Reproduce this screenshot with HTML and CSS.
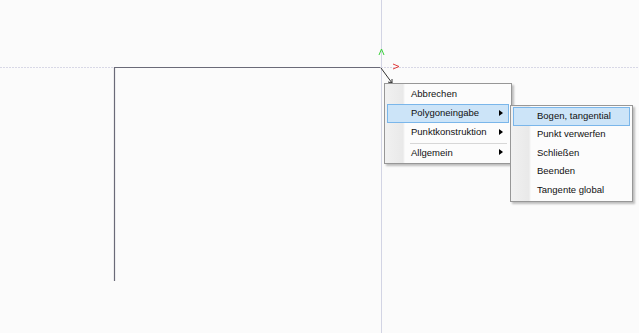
FILE: index.html
```html
<!DOCTYPE html>
<html lang="de">
<head>
    <meta charset="UTF-8">
    <title>Polygoneingabe</title>
    <link rel="stylesheet" href="styles.css">
</head>
<body>
    <div class="canvas">
        <!-- Zeichnung -->
        <svg class="drawing" width="639" height="333" viewBox="0 0 639 333">
            <line x1="381.5" y1="0" x2="381.5" y2="333" stroke="#d2d4e4" stroke-width="1"/>
            <line x1="0" y1="67.5" x2="639" y2="67.5" stroke="#d8d8e6" stroke-width="1" stroke-dasharray="2 1"/>
            <polyline points="114.5,281 114.5,67.5 380.5,67.5" fill="none" stroke="#6a6a78" stroke-width="1.2"/>
            <line x1="381" y1="68" x2="392" y2="83" stroke="#333" stroke-width="1"/>
            <polyline points="388,82 392,83 392,79" fill="none" stroke="#333" stroke-width="1"/>
            <polyline points="379,55 381.5,49 384,55" fill="none" stroke="#3ad13a" stroke-width="1"/>
            <polyline points="393,64 399,66.5 393,69" fill="none" stroke="#e03a3a" stroke-width="1"/>
        </svg>

        <!-- Kontextmenü -->
        <ul class="menu main-menu">
            <li class="item"><span class="label">Abbrechen</span></li>
            <li class="item active"><span class="label">Polygoneingabe</span><span class="arrow"></span></li>
            <li class="item"><span class="label">Punktkonstruktion</span><span class="arrow"></span></li>
            <li class="separator"></li>
            <li class="item"><span class="label">Allgemein</span><span class="arrow"></span></li>
        </ul>

        <ul class="menu sub-menu">
            <li class="item active"><span class="label">Bogen, tangential</span></li>
            <li class="item"><span class="label">Punkt verwerfen</span></li>
            <li class="item"><span class="label">Schließen</span></li>
            <li class="item"><span class="label">Beenden</span></li>
            <li class="item"><span class="label">Tangente global</span></li>
        </ul>
    </div>
</body>
</html>
```

FILE: styles.css
```css
body {
    margin: 0;
    padding: 0;
    background-color: #fbfbfb;
    font-family: "Liberation Sans", Arial, sans-serif;
    font-size: 9.5px;
    color: #111;
}

.canvas {
    position: relative;
    width: 639px;
    height: 333px;
    overflow: hidden;
}

.drawing {
    position: absolute;
    left: 0;
    top: 0;
}

.menu {
    position: absolute;
    margin: 0;
    padding: 1px 2px;
    list-style: none;
    background: linear-gradient(to right, #f1f1f1 0, #e9e9e9 18px, #fcfcfc 20px, #fcfcfc 100%);
    border: 1px solid #979797;
    box-shadow: 2px 2px 2px rgba(0, 0, 0, 0.25);
}

.main-menu {
    left: 384px;
    top: 83px;
    width: 122px;
}

.sub-menu {
    left: 510px;
    top: 105px;
    width: 117px;
}

.item {
    display: flex;
    align-items: center;
    height: 19px;
    padding-left: 23px;
    padding-bottom: 2px;
    border: 1px solid transparent;
    box-sizing: border-box;
}

.sub-menu .item {
    height: 18.5px;
}

.item.active {
    background-color: #cce4f8;
    border-color: #7ab6ea;
}

.label {
    flex: 1;
    white-space: nowrap;
}

.arrow {
    width: 0;
    height: 0;
    margin-right: 5px;
    border-top: 3px solid transparent;
    border-bottom: 3px solid transparent;
    border-left: 4px solid #000;
}

.separator {
    height: 1px;
    margin: 1px 2px 0 23px;
    background-color: #d7d7d7;
}

.main-menu .item:last-child {
    height: 18px;
}
```
